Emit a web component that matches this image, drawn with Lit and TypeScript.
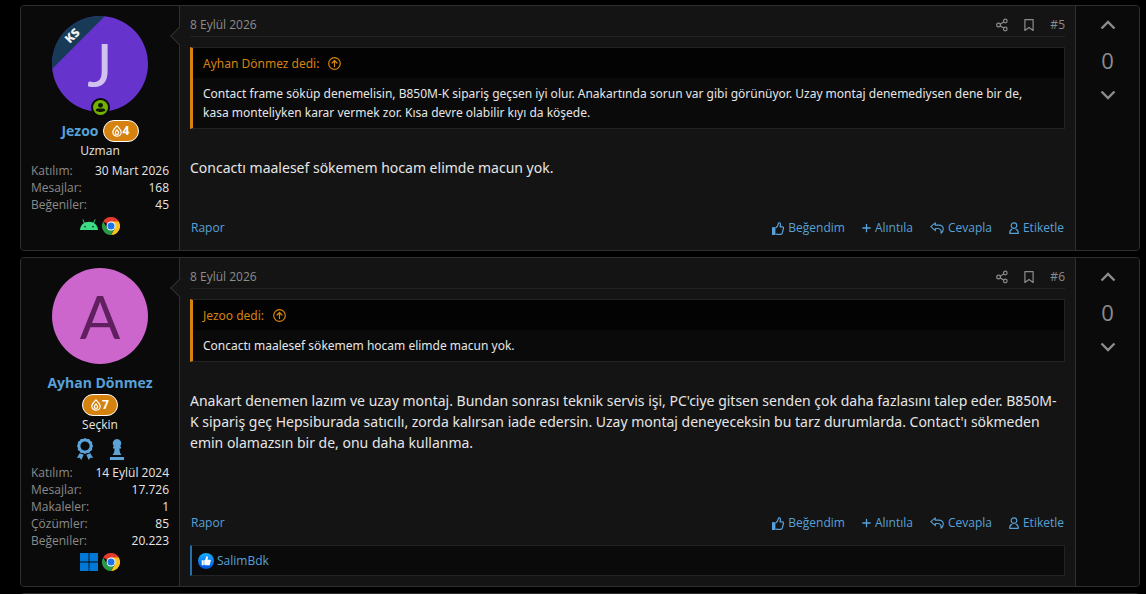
import { LitElement, html, css, svg, nothing } from "lit";
import { customElement, property } from "lit/decorators.js";

interface Quote {
  author: string;
  text: string;
}

interface Post {
  id: number;
  author: string;
  initial: string;
  avatar: string;
  ribbon?: string;
  online?: boolean;
  level: number;
  title: string;
  awards?: boolean;
  stats: [string, string][];
  platform: "android" | "windows";
  date: string;
  quote: Quote;
  body: string;
  votes: number;
  likedBy?: string;
}

const posts: Post[] = [
  {
    id: 5,
    author: "Jezoo",
    initial: "J",
    avatar: "violet",
    ribbon: "KS",
    online: true,
    level: 4,
    title: "Uzman",
    stats: [
      ["Katılım", "30 Mart 2026"],
      ["Mesajlar", "168"],
      ["Beğeniler", "45"],
    ],
    platform: "android",
    date: "8 Eylül 2026",
    quote: {
      author: "Ayhan Dönmez",
      text: "Contact frame söküp denemelisin, B850M-K sipariş geçsen iyi olur. Anakartında sorun var gibi görünüyor. Uzay montaj denemediysen dene bir de, kasa monteliyken karar vermek zor. Kısa devre olabilir kıyı da köşede.",
    },
    body: "Concactı maalesef sökemem hocam elimde macun yok.",
    votes: 0,
  },
  {
    id: 6,
    author: "Ayhan Dönmez",
    initial: "A",
    avatar: "pink",
    level: 7,
    title: "Seçkin",
    awards: true,
    stats: [
      ["Katılım", "14 Eylül 2024"],
      ["Mesajlar", "17.726"],
      ["Makaleler", "1"],
      ["Çözümler", "85"],
      ["Beğeniler", "20.223"],
    ],
    platform: "windows",
    date: "8 Eylül 2026",
    quote: {
      author: "Jezoo",
      text: "Concactı maalesef sökemem hocam elimde macun yok.",
    },
    body: "Anakart denemen lazım ve uzay montaj. Bundan sonrası teknik servis işi, PC'ciye gitsen senden çok daha fazlasını talep eder. B850M-K sipariş geç Hepsiburada satıcılı, zorda kalırsan iade edersin. Uzay montaj deneyeceksin bu tarz durumlarda. Contact'ı sökmeden emin olamazsın bir de, onu daha kullanma.",
    votes: 0,
    likedBy: "SalimBdk",
  },
];

const line = (w: number, h: number, box: string, width: number, shape: unknown) => html`
  <svg width=${w} height=${h} viewBox=${box} fill="none" stroke="currentColor"
    stroke-width=${width} stroke-linecap="round" stroke-linejoin="round" aria-hidden="true">${shape}</svg>`;

const icons = {
  share: line(12, 14, "0 0 12 14", 1.2, svg`
    <circle cx="2.6" cy="7" r="1.9"/><circle cx="9.3" cy="3" r="1.8"/><circle cx="9.3" cy="11" r="1.8"/>
    <path d="M4.3 6 7.7 4M4.3 8l3.4 2"/>`),
  bookmark: line(10, 14, "0 0 10 14", 1.2, svg`<path d="M.9 1.6h8.2v10.8L5 9.4.9 12.4z"/>`),
  up: line(16, 10, "0 0 16 10", 2.4, svg`<path d="M1.500 8.500 8 2l6.500 6.500" stroke-linecap="butt" stroke-linejoin="miter"/>`),
  down: line(16, 10, "0 0 16 10", 2.4, svg`<path d="M1.500 1.500 8 8l6.500-6.500" stroke-linecap="butt" stroke-linejoin="miter"/>`),
  jump: line(13, 13, "0 0 13 13", 1.2, svg`
    <circle cx="6.5" cy="6.5" r="5.8"/><path d="M6.5 9.6V3.8M4 6l2.5-2.5L9 6"/>`),
  thumb: html`<svg width="12" height="13" viewBox="0 0 12 13" aria-hidden="true">
    <path d="M0 5.2h3.4V13H0z" fill="currentColor"/>
    <path d="M3.6 6C5 5.2 5.9 3.9 6.2 2.2 6.4 1 6.7.6 7.3.7c1.200.1 1.500 1.900.7 4.100h2.400c1 0 1.300.8 1 1.700l-1.100 4.500c-.3 1-.8 1.400-1.700 1.400H5.400c-.8 0-1.300-.3-1.800-.8"
      fill="none" stroke="currentColor" stroke-width="1.200" stroke-linejoin="round"/></svg>`,
  plus: line(9, 10, "0 0 9 10", 1.3, svg`<path d="M.8 5h7.400M4.500 1.300v7.400"/>`),
  reply: line(14, 12, "0 0 14 12", 1.1, svg`
    <path d="M.8 4.700 5.300.9v2.200h3.200c3 0 4.800 1.600 4.800 4 0 1.700-.8 3.100-2.300 4.100.6-2.900-.6-4.600-3.200-4.700H5.300v2.200z"/>`),
  user: line(10, 12, "0 0 10 12", 1.2, svg`
    <circle cx="5" cy="3.600" r="2.800"/><path d="M2.900 7.300C1.300 7.700.7 8.800.7 11.300h8.600c0-2.500-.6-3.600-2.200-4"/>`),
  drop: line(10, 12, "0 0 10 12", 1.2, svg`
    <path d="M5 .8C3.400 2.700.8 4.700.8 7.200a4.200 4 0 0 0 8.400 0C9.200 4.700 6.600 2.700 5 .8z"/>
    <path d="M5 4.800C4 5.900 3.300 6.700 3.300 7.700a1.700 1.700 0 0 0 3.400 0C6.700 6.900 5.800 6.600 5 4.800z"/>`),
  online: html`<svg width="15" height="15" viewBox="0 0 16 16" aria-hidden="true">
    <circle cx="8" cy="8" r="8" fill="#72b300"/><circle cx="8" cy="5.700" r="2.600" fill="#101600"/>
    <path d="M2.800 11.200c.3-1.500 1.500-2.100 3-2.100h4.400c1.500 0 2.700.6 3 2.100-2.800 2.100-7.600 2.100-10.400 0z" fill="#101600"/></svg>`,
  medal: html`<svg width="16" height="22" viewBox="0 0 16 22" fill="currentColor" aria-hidden="true">
    <path fill-rule="evenodd" d="M8 0l2 1 2.200-.1 1.100 1.900 1.900 1.100L15.100 6l1 2-1 2 .1 2.100-1.900 1.100-1.100 1.900L10 15l-2 1-2-1-2.200.1-1.100-1.900L.8 12.100.9 10 0 8l.9-2L.8 3.900l1.900-1.100L3.800.9 6 1zM8 3.400a4.600 4.600 0 1 0 0 9.200 4.600 4.600 0 0 0 0-9.200z"/>
    <path d="M2.600 15.200 0 20l2.700-.3L4.300 22l2.400-5.200zM13.400 15.200 16 20l-2.700-.3-1.600 2.300-2.400-5.200z"/></svg>`,
  pawn: html`<svg width="14" height="22" viewBox="0 0 14 22" fill="currentColor" aria-hidden="true">
    <path d="M7 1a4.300 4.300 0 0 0-3 7.400H3v2h1.500c0 2.700-.3 4.600-2 6.600h9c-1.700-2-2-3.900-2-6.600H11v-2h-1A4.300 4.300 0 0 0 7 1zM0 19h14v3H0z"/></svg>`,
  android: html`<svg width="18" height="18" viewBox="0 0 18 18" role="img" aria-label="Android">
    <path d="M0 13C.2 8.300 4 4.800 9 4.800s8.800 3.500 9 8.200z" fill="#3ddc84"/>
    <path d="M4.800 7 3 2.800M13.200 7 15 2.800" stroke="#3ddc84" stroke-width=".9" stroke-linecap="round"/>
    <circle cx="5" cy="9.800" r=".8" fill="#0a0a0a"/><circle cx="13" cy="9.800" r=".8" fill="#0a0a0a"/></svg>`,
  windows: html`<svg width="18" height="18" viewBox="0 0 18 18" role="img" aria-label="Windows">
    <path d="M0 0h8.600v8.600H0zM9.400 0H18v8.600H9.400zM0 9.400h8.600V18H0zM9.400 9.400H18V18H9.400z" fill="#0078d6"/></svg>`,
  chrome: html`<svg width="18" height="18" viewBox="0 0 18 18" role="img" aria-label="Chrome">
    <path d="M9 9 1.200 4.500A9 9 0 0 1 16.800 4.500z" fill="#e33b2e"/>
    <path d="M16.800 4.500A9 9 0 0 1 9 18l3.900-6.800L9 4.500z" fill="#fcc31e"/>
    <path d="M9 18A9 9 0 0 1 1.200 4.500l3.900 6.800 7.800 0z" fill="#2a9a48"/>
    <circle cx="9" cy="9" r="4.500" fill="#fff"/><circle cx="9" cy="9" r="3.500" fill="#1a73e8"/></svg>`,
  like: html`<svg width="16" height="16" viewBox="0 0 16 16" aria-hidden="true">
    <defs><linearGradient id="blue" x1="0" y1="0" x2="0" y2="1">
      <stop offset="0" stop-color="#18afff"/><stop offset="1" stop-color="#0050e0"/></linearGradient></defs>
    <circle cx="8" cy="8" r="8" fill="url(#blue)"/>
    <path d="M3.700 7.300h2v5h-2zM6.200 7.400C7.500 6.600 8 5.600 8.100 4c.1-1 1.700-.9 1.800.6 0 .8-.2 1.500-.5 2.100h2.500c.8 0 1 .7.8 1.300l-.8 3.400c-.2.700-.6.900-1.200.9H7.500c-.6 0-1-.2-1.300-.5z" fill="#fff"/></svg>`,
};

@customElement("forum-post")
class ForumPost extends LitElement {
  @property({ attribute: false }) post!: Post;

  static styles = css`
    :host {
      display: flex;
      border: 1px solid #2f2f2f;
      border-radius: 4px;
      background: #141414;
      color: #e6e6e6;
    }
    a { color: #58a1d8; text-decoration: none; }
    svg { display: block; flex: none; }
    button {
      border: 0; padding: 0; background: none; color: inherit; font: inherit; cursor: pointer;
    }
    .user {
      position: relative;
      box-sizing: border-box;
      flex: none;
      width: 159px;
      padding: 10px 10px 15px;
      display: flex;
      flex-direction: column;
      align-items: center;
      border-right: 1px solid #2f2f2f;
      border-radius: 3px 0 0 3px;
      background: #0a0a0a;
      font-size: 12px;
      line-height: 17px;
    }
    .user::after {
      content: "";
      position: absolute;
      top: 23px;
      right: -8px;
      width: 13px;
      height: 13px;
      border: solid #2f2f2f;
      border-width: 0 0 1px 1px;
      background: #141414;
      transform: rotate(45deg);
    }
    .face { position: relative; width: 96px; height: 96px; }
    .disc {
      position: relative;
      display: flex;
      align-items: center;
      justify-content: center;
      height: 100%;
      border-radius: 50%;
      overflow: hidden;
      font-family: Lato, sans-serif;
      font-size: 60px;
      line-height: 96px;
    }
    .violet { background: #6633cc; color: #d1c2f0; }
    .pink { background: #cc66cc; color: #602060; }
    .ribbon {
      position: absolute;
      top: 10px;
      left: -30px;
      width: 100px;
      height: 19px;
      background: #173a56;
      color: #f2f2f2;
      font-family: "Open Sans", sans-serif;
      font-size: 12px;
      font-weight: 800;
      line-height: 19px;
      text-align: center;
      transform: rotate(-45deg);
    }
    .online {
      position: absolute;
      left: 39px;
      bottom: -5px;
      border: 2px solid #0a0a0a;
      border-radius: 50%;
      background: #0a0a0a;
    }
    .name {
      display: flex;
      flex-wrap: wrap;
      align-items: center;
      justify-content: center;
      column-gap: 4px;
      margin-top: 8px;
      font-size: 14px;
      font-weight: 700;
      line-height: 22px;
    }
    .level {
      box-sizing: border-box;
      display: flex;
      align-items: center;
      justify-content: center;
      gap: 1px;
      width: 36px;
      height: 22px;
      border: 1px solid #fff;
      border-radius: 11px;
      background: #d5820f;
      color: #fff;
      font-size: 12px;
    }
    .awards { display: flex; gap: 17px; padding: 5px 0 1px; color: #5ba3d9; }
    .stats { align-self: stretch; margin: 3px 0 0; }
    .pair { display: flex; justify-content: space-between; }
    dt { color: #8a8a8a; }
    dd { margin: 0; }
    .platforms { display: flex; gap: 4px; margin-top: 4px; }

    .main {
      flex: 1;
      min-width: 0;
      padding: 0 10px;
      display: flex;
      flex-direction: column;
    }
    .head {
      display: flex;
      align-items: center;
      gap: 16px;
      height: 31px;
      padding-top: 7px;
      box-sizing: border-box;
      border-bottom: 1px solid #232323;
      margin-bottom: 10px;
      color: #8c8c8c;
      font-size: 12px;
    }
    .head a { color: inherit; }
    .head .date { flex: 1; }
    blockquote {
      margin: 0;
      border: 1px solid #232323;
      border-left: 3px solid #d5820f;
      background: #0a0a0a;
      font-family: "Noto Sans", sans-serif;
      font-size: 12px;
      line-height: 19px;
    }
    .cite {
      display: flex;
      align-items: center;
      gap: 9px;
      height: 30px;
      padding: 0 10px;
      background: #030303;
      color: #d5820f;
    }
    .said { padding: 6px 20px 6px 10px; }
    .body {
      flex: 1;
      margin: 28px 0 0;
      font-family: "Noto Sans", sans-serif;
      font-size: 14px;
      line-height: 21px;
    }
    .actions {
      display: flex;
      justify-content: flex-end;
      gap: 17px;
      padding: 13px 1px 12px;
      font-size: 12px;
      line-height: 20px;
      color: #58a1d8;
    }
    .report { margin-right: auto; }
    .act { display: flex; align-items: center; gap: 4px; }
    .likes {
      display: flex;
      align-items: center;
      gap: 3px;
      margin-bottom: 10px;
      padding: 6px;
      border: 1px solid #232323;
      border-left: 2px solid #2570a5;
      background: #0a0a0a;
      font-size: 12px;
      line-height: 17px;
    }

    .vote {
      box-sizing: border-box;
      flex: none;
      width: 64px;
      padding-top: 14px;
      display: flex;
      flex-direction: column;
      align-items: center;
      gap: 15px;
      border-left: 1px solid #2f2f2f;
      border-radius: 0 3px 3px 0;
      background: #0a0a0a;
      color: #8c8c8c;
      font-size: 22px;
      line-height: 30px;
    }
  `;

  render() {
    const p = this.post;
    return html`
      <section class="user">
        <div class="face">
          <div class="disc ${p.avatar}">
            ${p.initial}
            ${p.ribbon ? html`<span class="ribbon">${p.ribbon}</span>` : nothing}
          </div>
          ${p.online ? html`<span class="online">${icons.online}</span>` : nothing}
        </div>
        <div class="name">
          <a href="#">${p.author}</a>
          <span class="level">${icons.drop}${p.level}</span>
        </div>
        <div>${p.title}</div>
        ${p.awards ? html`<div class="awards">${icons.medal}${icons.pawn}</div>` : nothing}
        <dl class="stats">
          ${p.stats.map(([k, v]) => html`<div class="pair"><dt>${k}:</dt><dd>${v}</dd></div>`)}
        </dl>
        <div class="platforms">${icons[p.platform]}${icons.chrome}</div>
      </section>
      <article class="main">
        <header class="head">
          <a class="date" href="#">${p.date}</a>
          <button aria-label="Paylaş">${icons.share}</button>
          <button aria-label="Yer imi">${icons.bookmark}</button>
          <a href="#">#${p.id}</a>
        </header>
        <blockquote>
          <a class="cite" href="#">${p.quote.author} dedi: ${icons.jump}</a>
          <div class="said">${p.quote.text}</div>
        </blockquote>
        <p class="body">${p.body}</p>
        <footer class="actions">
          <a class="report" href="#">Rapor</a>
          <button class="act">${icons.thumb}Beğendim</button>
          <button class="act">${icons.plus}Alıntıla</button>
          <button class="act">${icons.reply}Cevapla</button>
          <button class="act">${icons.user}Etiketle</button>
        </footer>
        ${p.likedBy
          ? html`<div class="likes">${icons.like}<a href="#">${p.likedBy}</a></div>`
          : nothing}
      </article>
      <aside class="vote">
        <button aria-label="Artı oy">${icons.up}</button>
        <span>${p.votes}</span>
        <button aria-label="Eksi oy">${icons.down}</button>
      </aside>
    `;
  }
}

@customElement("app-root")
class AppRoot extends LitElement {
  static styles = css`
    :host {
      box-sizing: border-box;
      display: flex;
      flex-direction: column;
      gap: 6px;
      height: 100vh;
      overflow: hidden;
      padding: 5px 6px 0 20px;
      background: #000;
      font-family: "Open Sans", "Noto Sans", sans-serif;
    }
    forum-post { flex: none; }
    .next {
      flex: none;
      height: 40px;
      border: 1px solid #2f2f2f;
      border-radius: 4px;
      background: #141414;
    }
  `;

  render() {
    return html`
      ${posts.map((p) => html`<forum-post .post=${p}></forum-post>`)}
      <div class="next"></div>
    `;
  }
}
